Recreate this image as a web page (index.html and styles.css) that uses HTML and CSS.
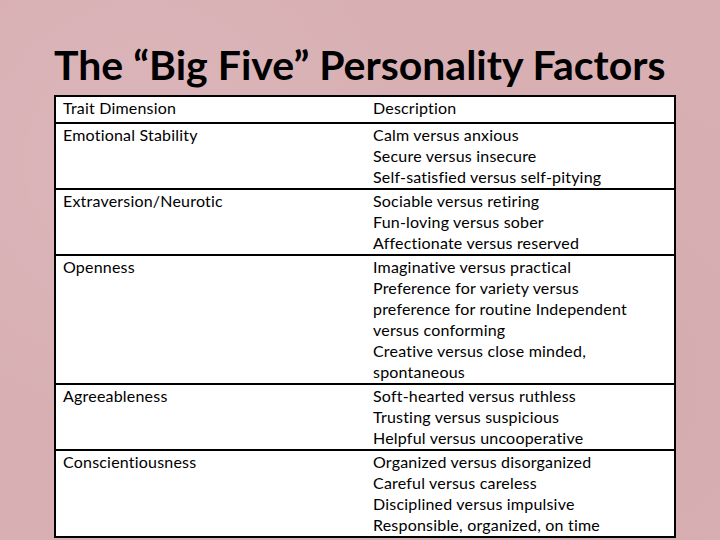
FILE: index.html
```html
<!DOCTYPE html>
<html>
<head>
<meta charset="utf-8">
<link rel="stylesheet" href="styles.css">
</head>
<body>
<div class="slide">
  <h1 class="title">The “Big Five” Personality Factors</h1>
  <table class="traits">
    <thead>
      <tr><th class="c1">Trait Dimension</th><th class="c2">Description</th></tr>
    </thead>
    <tbody>
      <tr><td class="c1">Emotional Stability</td><td class="c2">Calm versus anxious<br>Secure versus insecure<br>Self-satisfied versus self-pitying</td></tr>
      <tr><td class="c1">Extraversion/Neurotic</td><td class="c2">Sociable versus retiring<br>Fun-loving versus sober<br>Affectionate versus reserved</td></tr>
      <tr><td class="c1">Openness</td><td class="c2">Imaginative versus practical<br>Preference for variety versus<br>preference for routine Independent<br>versus conforming<br>Creative versus close minded,<br>spontaneous</td></tr>
      <tr><td class="c1">Agreeableness</td><td class="c2">Soft-hearted versus ruthless<br>Trusting versus suspicious<br>Helpful versus uncooperative</td></tr>
      <tr><td class="c1">Conscientiousness</td><td class="c2">Organized versus disorganized<br>Careful versus careless<br>Disciplined versus impulsive<br>Responsible, organized, on time</td></tr>
    </tbody>
  </table>
</div>
</body>
</html>
```
FILE: styles.css
```css
html, body {
  margin: 0;
  padding: 0;
}
body {
  width: 720px;
  height: 540px;
  overflow: hidden;
  background-color: #d8b0b4;
  background-image:
    radial-gradient(circle at 20% 30%, rgba(255,255,255,0.08), transparent 40%),
    radial-gradient(circle at 80% 70%, rgba(160,110,115,0.08), transparent 45%);
  font-family: "Lato", "Open Sans", sans-serif;
  color: #000;
}
.slide {
  padding-top: 42px;
  padding-left: 54px;
}
.title {
  margin: 0 0 7px 0;
  font-family: "Lato", "Open Sans", sans-serif;
  font-weight: 700;
  font-size: 41px;
  line-height: 46px;
  white-space: nowrap;
}
.traits {
  border-collapse: collapse;
  background: #fff;
  border: 2px solid #000;
  width: 622px;
  font-size: 16px;
  letter-spacing: 0.2px;
}
.traits th, .traits td {
  font-weight: 400;
  text-align: left;
  vertical-align: top;
  padding: 0 0 1px 7px;
  line-height: 21px;
}
.traits th {
  padding-top: 0;
  padding-bottom: 4px;
}
.traits .c1 { width: 303px; }
.traits thead tr { border-bottom: 2px solid #000; }
.traits tbody tr { border-bottom: 2px solid #000; }
.traits tbody tr:last-child { border-bottom: none; }
```
